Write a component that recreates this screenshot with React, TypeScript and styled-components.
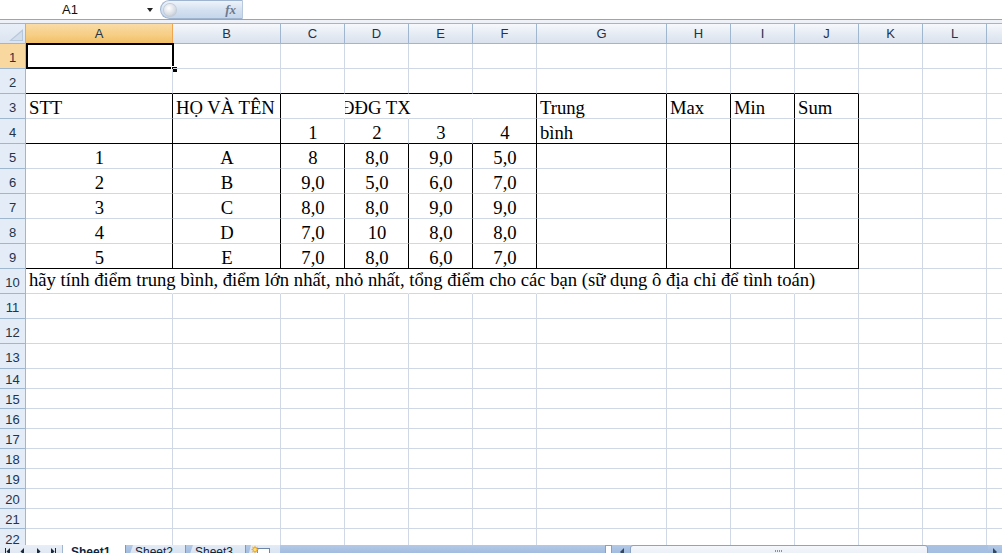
import React from "react";
import styled, { createGlobalStyle } from "styled-components";

const GlobalStyle = createGlobalStyle`
  html, body {
    margin: 0;
    padding: 0;
    background: #fff;
  }
  body {
    font-family: "Liberation Sans", Arial, sans-serif;
  }
`;

const COLS = [
  { id: "A", w: 147 },
  { id: "B", w: 108 },
  { id: "C", w: 64 },
  { id: "D", w: 64 },
  { id: "E", w: 64 },
  { id: "F", w: 64 },
  { id: "G", w: 130 },
  { id: "H", w: 64 },
  { id: "I", w: 64 },
  { id: "J", w: 64 },
  { id: "K", w: 64 },
  { id: "L", w: 64 },
  { id: "M", w: 64 },
];
const ROW_COUNT = 22;

type Line = "grid" | "black" | "none";
type CellSpec = { text: string; align?: "left" | "center"; kind?: "title" | "note" };

const DATA_ROWS = [
  ["1", "A", "8", "8,0", "9,0", "5,0"],
  ["2", "B", "9,0", "5,0", "6,0", "7,0"],
  ["3", "C", "8,0", "8,0", "9,0", "9,0"],
  ["4", "D", "7,0", "10", "8,0", "8,0"],
  ["5", "E", "7,0", "8,0", "6,0", "7,0"],
];

const content: Record<string, CellSpec> = {
  A3: { text: "STT" },
  B3: { text: "HỌ VÀ TÊN" },
  D3: { text: "ĐĐG TX", kind: "title" },
  G3: { text: "Trung" },
  H3: { text: "Max" },
  I3: { text: "Min" },
  J3: { text: "Sum" },
  C4: { text: "1", align: "center" },
  D4: { text: "2", align: "center" },
  E4: { text: "3", align: "center" },
  F4: { text: "4", align: "center" },
  G4: { text: "bình" },
  A10: {
    text: "hãy tính điểm trung bình, điểm lớn nhất, nhỏ nhất, tổng điểm cho các bạn (sữ dụng ô địa chỉ để tình toán)",
    kind: "note",
  },
};
DATA_ROWS.forEach((row, i) =>
  row.forEach((v, c) => {
    content[COLS[c].id + (i + 5)] = { text: v, align: "center" };
  })
);

// table borders are drawn over the gridlines
function rightLine(c: number, r: number): Line {
  if (r === 3 && c >= 2 && c <= 4) return "none";
  if (r === 10 && c <= 8) return "none";
  if (r >= 3 && r <= 9 && [0, 1, 5, 6, 7, 8, 9].includes(c)) return "black";
  if (r >= 5 && r <= 9 && c >= 2 && c <= 4) return "black";
  return "grid";
}
function bottomLine(c: number, r: number): Line {
  if ((r === 2 || r === 4 || r === 9) && c <= 9) return "black";
  return "grid";
}
const lineColor = (l: Line) => (l === "black" ? "#000" : l === "none" ? "transparent" : "#d0d7e5");

const Window = styled.div`
  width: 1002px;
  height: 553px;
  display: flex;
  flex-direction: column;
  overflow: hidden;
  background: #fff;
`;

const FormulaBar = styled.div`
  flex: none;
  height: 19px;
  display: flex;
  align-items: center;
  border-bottom: 1px solid #8fa7c6;
  background: #fff;
`;

const NameBox = styled.div`
  width: 140px;
  text-align: center;
  font-size: 13px;
  color: #111;
`;

const NameArrow = styled.div`
  width: 0;
  height: 0;
  margin-left: 7px;
  border-left: 3px solid transparent;
  border-right: 3px solid transparent;
  border-top: 4px solid #222;
`;

const FxPill = styled.div`
  width: 83px;
  height: 19px;
  margin-left: 7px;
  box-sizing: border-box;
  display: flex;
  align-items: center;
  justify-content: space-between;
  padding: 0 6px 0 3px;
  border: 1px solid #9fb4cf;
  border-right-color: #b9c9dd;
  border-radius: 10px 0 0 10px;
  background: linear-gradient(#eef3fa, #d3e0f0 55%, #c6d6ec);
`;

const CancelKnob = styled.div`
  width: 12px;
  height: 12px;
  border-radius: 50%;
  background: radial-gradient(circle at 40% 35%, #fff, #d8dde4 60%, #aab3bf);
  box-shadow: 0 0 0 1px #c3ccd8;
`;

const FxLabel = styled.i`
  font: italic 700 13px "Liberation Serif", "Times New Roman", serif;
  color: #6a7a8e;
`;

const FormulaInput = styled.div`
  flex: 1;
  height: 19px;
  background: #fff;
`;

const Ribbon = styled.div`
  flex: none;
  height: 3px;
  background: #eef2f8;
`;

const Sheet = styled.div<{ $columns: string }>`
  flex: 1;
  min-height: 0;
  overflow: hidden;
  display: grid;
  grid-template-columns: ${(p) => p.$columns};
  grid-template-rows: 21px repeat(13, 25px) repeat(9, 20px);
  background: #fff;
`;

const Corner = styled.div`
  box-sizing: border-box;
  border-top: 1px solid #9eb6ce;
  border-right: 1px solid #9eb6ce;
  border-bottom: 1px solid #9eb6ce;
  background: linear-gradient(#e9eff7, #dbe4f0);
  display: flex;
  align-items: flex-end;
  justify-content: flex-end;
  padding: 0 2px 2px 0;
`;

const ColHeader = styled.div<{ $selected?: boolean }>`
  box-sizing: border-box;
  border-top: 1px solid #9eb6ce;
  border-right: 1px solid ${(p) => (p.$selected ? "#f0a550" : "#9eb6ce")};
  border-bottom: 1px solid ${(p) => (p.$selected ? "#f29536" : "#9eb6ce")};
  background: ${(p) =>
    p.$selected ? "linear-gradient(#f9dca6, #f6cd83 60%, #f2c066)" : "linear-gradient(#f6f8fc, #e4eaf3 60%, #dae2ed)"};
  display: flex;
  align-items: center;
  justify-content: center;
  font-size: 13px;
  color: #22334a;
`;

const RowHeader = styled.div<{ $selected?: boolean }>`
  box-sizing: border-box;
  border-right: 1px solid ${(p) => (p.$selected ? "#f0a550" : "#9eb6ce")};
  border-bottom: 1px solid #9eb6ce;
  background: ${(p) => (p.$selected ? "#f8d89f" : "#e4ecf7")};
  display: flex;
  align-items: center;
  justify-content: center;
  padding-top: 2px;
  font-size: 13px;
  color: #22334a;
`;

const Cell = styled.div<{ $right: Line; $bottom: Line; $align?: string; $top?: boolean }>`
  box-sizing: border-box;
  position: relative;
  min-width: 0;
  border-right: 1px solid ${(p) => lineColor(p.$right)};
  border-bottom: 1px solid ${(p) => lineColor(p.$bottom)};
  display: flex;
  align-items: ${(p) => (p.$top ? "flex-start" : "flex-end")};
  justify-content: ${(p) => (p.$align === "center" ? "center" : "flex-start")};
  padding: 0 2px 0 3px;
  font-family: "Liberation Serif", "Times New Roman", serif;
  font-size: 18.67px;
  line-height: 21px;
  color: #000;
  white-space: nowrap;
`;

const TitleClip = styled.div`
  display: flex;
  clip-path: inset(0 -400px 0 0);
  margin-left: -3px;
  align-self: stretch;
  align-items: flex-end;
`;

const TitleText = styled.span`
  margin-left: -4px;
`;

const Selection = styled.div`
  position: absolute;
  top: -1px;
  left: 0;
  right: -2px;
  bottom: -1px;
  border: 2px solid #000;
  pointer-events: none;
`;

const FillHandle = styled.div`
  position: absolute;
  right: -5px;
  bottom: -5px;
  width: 5px;
  height: 5px;
  background: #000;
  box-shadow: 0 0 0 1px #fff;
`;

const TabBar = styled.div`
  flex: none;
  height: 8px;
  display: flex;
  align-items: flex-start;
  overflow: hidden;
  background: linear-gradient(#b3c9e7, #a2bce0);
  font-size: 12px;
`;

const NavGroup = styled.div`
  flex: none;
  width: 63px;
  height: 20px;
  box-sizing: border-box;
  border-right: 1px solid #9eb6ce;
  background: linear-gradient(#e8eef7, #d6e0ee);
`;

const SheetTab = styled.div<{ $active?: boolean; $width: number }>`
  flex: none;
  width: ${(p) => p.$width}px;
  height: 20px;
  box-sizing: border-box;
  padding: 0 0 0 ${(p) => (p.$active ? "8px" : "9px")};
  line-height: 15px;
  font-weight: ${(p) => (p.$active ? 700 : 400)};
  color: #10243d;
  background: ${(p) => (p.$active ? "#fff" : "linear-gradient(#e3ebf6, #cbd9ed)")};
  border-right: 1px solid #7f99bd;
  clip-path: ${(p) => (p.$active ? "none" : "polygon(7px 0, 100% 0, 100% 100%, 0 100%)")};
`;

const NewSheetTab = styled.div`
  flex: none;
  width: 34px;
  height: 20px;
  background: linear-gradient(#e3ebf6, #cbd9ed);
  clip-path: polygon(5px 0, 100% 0, 100% 100%, 0 100%);
`;

const TabFiller = styled.div`
  flex: 1;
  height: 20px;
`;

const Splitter = styled.div`
  flex: none;
  width: 7px;
  height: 20px;
  box-sizing: border-box;
  border: 1px solid #8aa0bd;
  background: #fff;
  margin-right: 1px;
`;

const ScrollButton = styled.div<{ $width: number }>`
  flex: none;
  width: ${(p) => p.$width}px;
  height: 20px;
  display: flex;
  justify-content: center;
  padding-top: 3px;
  box-sizing: border-box;
`;

const ScrollThumb = styled.div`
  flex: none;
  width: 298px;
  height: 20px;
  box-sizing: border-box;
  border: 1px solid #8ba3c4;
  border-radius: 3px;
  background: linear-gradient(#f4f7fb, #e1e9f4);
  display: flex;
  justify-content: center;
  padding-top: 3px;
`;

const ScrollTrack = styled.div`
  flex: none;
  width: 60px;
  height: 20px;
  background: linear-gradient(#a9c2e4, #9cb7dd);
`;

const NavIcons = () => (
  <svg width="62" height="12" viewBox="0 0 62 12">
    <g fill="#1b2a3d">
      <rect x="5" y="3" width="1" height="7" />
      <polygon points="10,3 6.5,6.5 10,10" />
      <polygon points="24,3 20.5,6.5 24,10" />
      <polygon points="37,3 40.5,6.5 37,10" />
      <polygon points="51,3 54.5,6.5 51,10" />
      <rect x="55" y="3" width="1" height="7" />
    </g>
  </svg>
);

const NewSheetIcon = () => (
  <svg width="34" height="12" viewBox="0 0 34 12">
    <rect x="11.5" y="3.5" width="12" height="9" fill="#fff" stroke="#6d86a8" />
    <polygon points="9,0.5 10,2.5 12,1.5 11,3.5 13,4.5 11,5.5 12,7.5 10,6.5 9,8.5 8,6.5 6,7.5 7,5.5 5,4.5 7,3.5 6,1.5 8,2.5" fill="#f5a623" />
    <circle cx="9" cy="4.5" r="1.6" fill="#ffe27a" />
  </svg>
);

export default function App() {
  const columns = `26px ${COLS.map((c) => `${c.w}px`).join(" ")}`;
  const cells: React.ReactNode[] = [];

  cells.push(
    <Corner key="corner">
      <svg width="14" height="12" viewBox="0 0 14 12">
        <polygon points="0,12 14,0 14,12" fill="#b7c8dc" />
        <polygon points="3,11 13,2.5 13,11" fill="#d3deeb" />
      </svg>
    </Corner>
  );
  COLS.forEach((c, i) =>
    cells.push(
      <ColHeader key={`h-${c.id}`} $selected={i === 0}>
        {c.id}
      </ColHeader>
    )
  );

  for (let r = 1; r <= ROW_COUNT; r++) {
    cells.push(
      <RowHeader key={`r-${r}`} $selected={r === 1}>
        {r}
      </RowHeader>
    );
    COLS.forEach((col, c) => {
      const id = col.id + r;
      const spec = content[id];
      cells.push(
        <Cell key={id} $right={rightLine(c, r)} $bottom={bottomLine(c, r)} $align={spec?.align} $top={spec?.kind === "note"}>
          {spec?.kind === "title" ? (
            <TitleClip>
              <TitleText>{spec.text}</TitleText>
            </TitleClip>
          ) : (
            spec?.text
          )}
          {id === "A1" && (
            <Selection>
              <FillHandle />
            </Selection>
          )}
        </Cell>
      );
    });
  }

  return (
    <>
      <GlobalStyle />
      <Window>
        <FormulaBar>
          <NameBox>A1</NameBox>
          <NameArrow />
          <FxPill>
            <CancelKnob />
            <FxLabel>fx</FxLabel>
          </FxPill>
          <FormulaInput />
        </FormulaBar>
        <Ribbon />
        <Sheet $columns={columns}>{cells}</Sheet>
        <TabBar>
          <NavGroup>
            <NavIcons />
          </NavGroup>
          <SheetTab $active $width={63}>
            Sheet1
          </SheetTab>
          <SheetTab $width={60}>Sheet2</SheetTab>
          <SheetTab $width={60}>Sheet3</SheetTab>
          <NewSheetTab>
            <NewSheetIcon />
          </NewSheetTab>
          <TabFiller />
          <Splitter />
          <ScrollButton $width={17}>
            <svg width="6" height="8" viewBox="0 0 6 8">
              <polygon points="5,0 1,4 5,8" fill="#33475f" />
            </svg>
          </ScrollButton>
          <ScrollThumb>
            <svg width="8" height="4" viewBox="0 0 8 4">
              <g fill="#7f93ad">
                <rect x="0" y="1" width="1" height="2" />
                <rect x="2" y="1" width="1" height="2" />
                <rect x="4" y="1" width="1" height="2" />
                <rect x="6" y="1" width="1" height="2" />
              </g>
            </svg>
          </ScrollThumb>
          <ScrollTrack />
          <ScrollButton $width={14}>
            <svg width="6" height="8" viewBox="0 0 6 8">
              <polygon points="1,0 5,4 1,8" fill="#33475f" />
            </svg>
          </ScrollButton>
        </TabBar>
      </Window>
    </>
  );
}
